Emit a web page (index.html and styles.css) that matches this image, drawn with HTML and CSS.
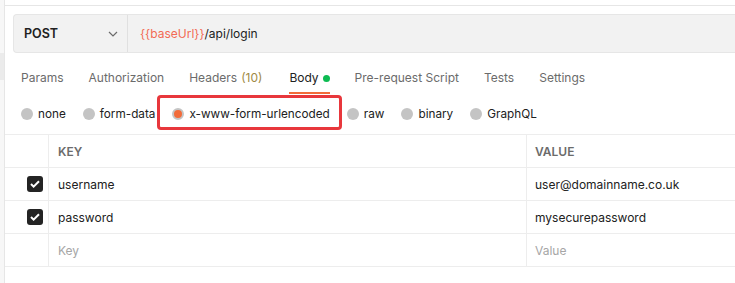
FILE: index.html
```html
<!DOCTYPE html>
<html>
<head>
<meta charset="utf-8">
<link rel="stylesheet" href="styles.css">
</head>
<body>
<div class="app">
  <div class="rail"><div class="rail-active"></div></div>
  <div class="main">
    <div class="topline"></div>
    <div class="urlbar">
      <div class="method">
        <span class="method-name">POST</span>
        <svg class="chev" width="10" height="6" viewBox="0 0 10 6"><path d="M1 1l4 4 4-4" fill="none" stroke="#6b6b6b" stroke-width="1.2"/></svg>
      </div>
      <div class="url"><span class="var">{{baseUrl}}</span>/api/login</div>
    </div>
    <div class="tabs">
      <div class="tab">Params</div>
      <div class="tab">Authorization</div>
      <div class="tab">Headers <span class="count">(10)</span></div>
      <div class="tab active">Body <span class="dot"></span></div>
      <div class="tab">Pre-request Script</div>
      <div class="tab">Tests</div>
      <div class="tab">Settings</div>
    </div>
    <div class="radios">
      <div class="radio"><span class="circle"></span>none</div>
      <div class="radio"><span class="circle"></span>form-data</div>
      <div class="radio selected"><span class="circle"></span>x-www-form-urlencoded</div>
      <div class="radio"><span class="circle"></span>raw</div>
      <div class="radio"><span class="circle"></span>binary</div>
      <div class="radio"><span class="circle"></span>GraphQL</div>
    </div>
    <div class="table">
      <div class="row head">
        <div class="c-check"></div>
        <div class="c-key">KEY</div>
        <div class="c-val">VALUE</div>
      </div>
      <div class="row">
        <div class="c-check"><span class="cb"><svg width="10" height="8" viewBox="0 0 10 8"><path d="M1 4l2.6 2.6L9 1.2" fill="none" stroke="#fff" stroke-width="2"/></svg></span></div>
        <div class="c-key">username</div>
        <div class="c-val">user@domainname.co.uk</div>
      </div>
      <div class="row">
        <div class="c-check"><span class="cb"><svg width="10" height="8" viewBox="0 0 10 8"><path d="M1 4l2.6 2.6L9 1.2" fill="none" stroke="#fff" stroke-width="2"/></svg></span></div>
        <div class="c-key">password</div>
        <div class="c-val">mysecurepassword</div>
      </div>
      <div class="row">
        <div class="c-check"></div>
        <div class="c-key ph">Key</div>
        <div class="c-val ph">Value</div>
      </div>
    </div>
  </div>
</div>
</body>
</html>
```
FILE: styles.css
```css
html, body {
  margin: 0;
  padding: 0;
  background: #fff;
}
body {
  width: 735px;
  height: 283px;
  overflow: hidden;
  font-family: Inter, "Noto Sans", sans-serif;
  font-size: 12px;
  color: #212121;
}
.app {
  display: flex;
  height: 283px;
}
.rail {
  width: 4px;
  flex: none;
  background: #f7f7f7;
  border-right: 1px solid #e6e6e6;
  padding-top: 53px;
}
.rail-active {
  height: 27px;
  background: #ebebeb;
}
.main {
  flex: 1;
  min-width: 0;
}
.topline {
  height: 5px;
  border-bottom: 1px solid #e6e6e6;
}
.urlbar {
  display: flex;
  margin: 8px 0 0 8px;
  height: 37px;
  background: #f2f2f2;
  border: 1px solid #e6e6e6;
  border-right: none;
  border-radius: 4px 0 0 4px;
}
.method {
  width: 114px;
  box-sizing: border-box;
  flex: none;
  display: flex;
  align-items: center;
  justify-content: space-between;
  padding: 0 9px 0 10px;
  border-right: 1px solid #e0e0e0;
}
.method-name {
  font-weight: 600;
  font-size: 12.5px;
  color: #212121;
}
.url {
  display: flex;
  align-items: center;
  padding-left: 12px;
  font-size: 12px;
  color: #212121;
}
.var {
  color: #f26b55;
}
.tabs {
  display: flex;
  gap: 25px;
  padding-left: 16px;
}
.tab {
  padding-top: 16px;
  line-height: 18px;
  padding-bottom: 5px;
  border-bottom: 2px solid transparent;
  color: #6b6b6b;
  font-size: 12px;
  display: flex;
  align-items: center;
  gap: 4px;
}
.tab.active {
  color: #212121;
  border-bottom-color: #f26b3a;
  margin-left: 2px;
}
.count {
  color: #a08a45;
}
.dot {
  width: 7px;
  height: 7px;
  border-radius: 50%;
  background: #0cbb52;
}
.radios {
  display: flex;
  gap: 17px;
  padding: 11px 0 11px 16px;
}
.radio {
  position: relative;
  display: flex;
  align-items: center;
  gap: 5px;
  line-height: 18px;
  font-size: 11.75px;
  color: #212121;
}
.circle {
  width: 12px;
  height: 12px;
  border-radius: 50%;
  background: #c4c4c4;
  box-sizing: border-box;
}
.radio.selected .circle {
  background: #f26b3a;
  border: 2px solid #c4c4c4;
}
.radio.selected::after {
  content: "";
  position: absolute;
  left: -15px;
  right: -12px;
  top: -10px;
  bottom: -7px;
  border: 3px solid #e8373c;
  border-radius: 4px;
}
.table {
  border-top: 1px solid #ededed;
}
.row {
  display: flex;
  height: 32px;
  border-bottom: 1px solid #ededed;
}
.c-check {
  width: 44px;
  flex: none;
  border-right: 1px solid #ededed;
  display: flex;
  align-items: center;
  justify-content: flex-end;
  padding-right: 5px;
  box-sizing: border-box;
}
.c-key {
  width: 478px;
  flex: none;
  border-right: 1px solid #ededed;
  padding-left: 9px;
  box-sizing: border-box;
  display: flex;
  align-items: center;
  font-size: 12px;
}
.c-val {
  flex: 1;
  padding-left: 8px;
  display: flex;
  align-items: center;
  font-size: 12px;
}
.head .c-key, .head .c-val {
  font-weight: 600;
  color: #6b6b6b;
  font-size: 12px;
}
.ph {
  color: #a6a6a6;
}
.cb {
  width: 16px;
  height: 16px;
  border-radius: 3px;
  background: #242424;
  display: flex;
  align-items: center;
  justify-content: center;
}
```
